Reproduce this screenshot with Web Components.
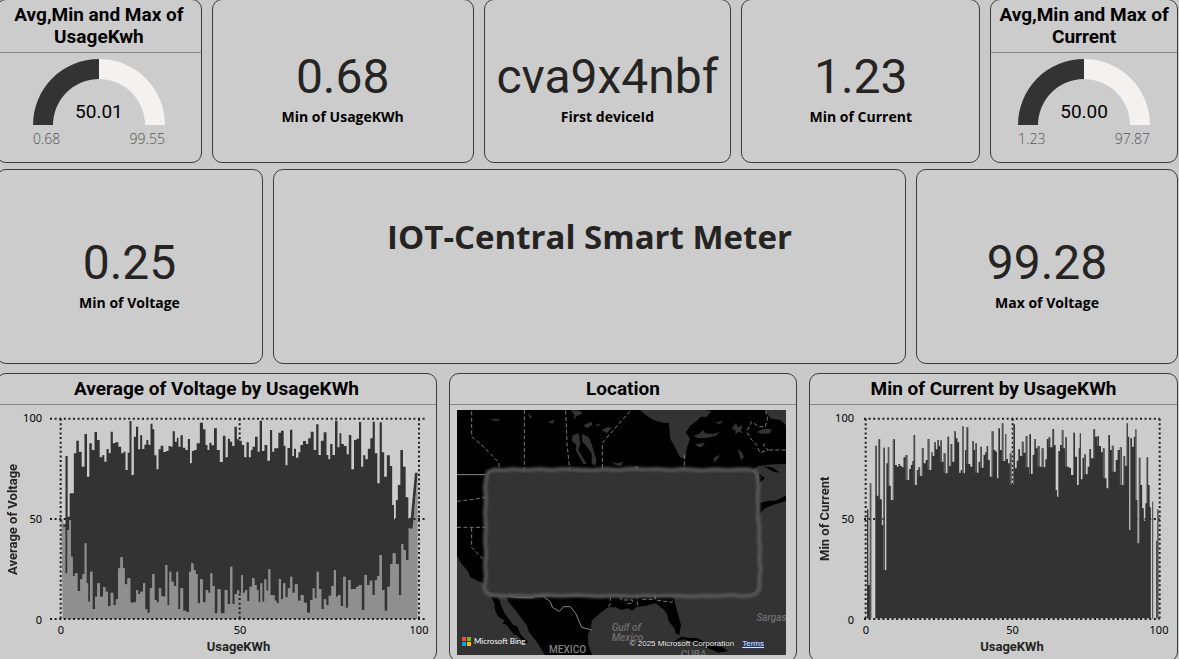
<!DOCTYPE html>
<html lang="en">
<head>
<meta charset="utf-8">
<meta name="viewport" content="width=device-width, initial-scale=1">
<title>IOT-Central Smart Meter</title>
<style>
  body { margin: 0; background: #c9c9c9; color: #000; font-family: Roboto, "Liberation Sans", sans-serif; }
</style>
</head>
<body>
<smart-dashboard></smart-dashboard>

<template id="t-dashboard">
  <style>
    :host { display: block; min-height: 100vh; overflow: hidden; }
    main {
      display: grid; gap: 6px;
      grid-template-rows: 164fr 195fr 292fr;
      min-height: calc(100vh + 4px);
      margin: -1px 1px -3px -4px;
    }
    .row { display: grid; gap: 10px; }
    .top { grid-template-columns: 206fr 262fr 248fr 239fr 188fr; }
    .mid { grid-template-columns: 267fr 633fr 262fr; }
    .low { grid-template-columns: 441fr 348fr 369fr; gap: 12px; margin-top: 3px; }
    h1 {
      margin: 0; padding-top: 43px; text-align: center; color: #252423;
      font: 700 33px/48px "Open Sans", "Noto Sans", sans-serif;
    }
    .current { --pad-left: 7px; --pad-right: 15px; --tick-left: -8px; --tick-right: -9px; }
  </style>
  <main>
    <div class="row top">
      <dash-card heading="Avg,Min and Max of UsageKwh"><value-gauge value="50.01" min="0.68" max="99.55"></value-gauge></dash-card>
      <dash-card><kpi-value value="0.68">Min of UsageKWh</kpi-value></dash-card>
      <dash-card><kpi-value value="cva9x4nbf">First deviceId</kpi-value></dash-card>
      <dash-card><kpi-value value="1.23">Min of Current</kpi-value></dash-card>
      <dash-card heading="Avg,Min and Max of Current"><value-gauge value="50.00" min="1.23" max="97.87"></value-gauge></dash-card>
    </div>
    <div class="row mid">
      <dash-card><kpi-value value="0.25">Min of Voltage</kpi-value></dash-card>
      <dash-card><h1>IOT-Central Smart Meter</h1></dash-card>
      <dash-card><kpi-value value="99.28">Max of Voltage</kpi-value></dash-card>
    </div>
    <div class="row low">
      <dash-card heading="Average of Voltage by UsageKWh"><usage-chart series="voltage" ytitle="Average of Voltage"></usage-chart></dash-card>
      <dash-card heading="Location"><location-map></location-map></dash-card>
      <dash-card heading="Min of Current by UsageKWh"><usage-chart class="current" series="current" ytitle="Min of Current"></usage-chart></dash-card>
    </div>
  </main>
</template>

<template id="t-card">
  <style>
    :host {
      display: flex; flex-direction: column; box-sizing: border-box; min-width: 0;
      border: 1px solid #3a3a3a; border-radius: 10px; background: #ccc; overflow: hidden;
    }
    h2 {
      margin: 0; padding: 4px; text-align: center; border-bottom: 1px solid #858585;
      font-size: 19px; line-height: 22px; font-weight: 700;
    }
    h2[hidden] { display: none; }
    ::slotted(*) { flex: 1; min-height: 0; }
  </style>
  <h2></h2>
  <slot></slot>
</template>

<template id="t-kpi">
  <style>
    :host { display: flex; flex-direction: column; align-items: center; justify-content: center; gap: 6px; padding-top: 16px; }
    .value { font-size: 48px; line-height: 50px; color: #252423; }
    .label { font: 700 14px/18px "Open Sans", "Noto Sans", sans-serif; }
  </style>
  <div class="value"></div>
  <div class="label"><slot></slot></div>
</template>

<template id="t-gauge">
  <style>
    :host { display: flex; flex-direction: column; align-items: center; padding-top: 6px; }
    .dial { position: relative; width: 132px; height: 66px; }
    svg { display: block; width: 100%; height: 100%; }
    output { position: absolute; inset: auto 0 0; text-align: center; font-size: 19px; line-height: 26px; }
    .range {
      display: flex; justify-content: space-between; width: 132px; color: #555;
      font: 300 14px/20px "Open Sans", "Noto Sans", sans-serif; padding-top: 4px;
    }
  </style>
  <div class="dial">
    <svg viewBox="0 0 132 66" aria-hidden="true">
      <path fill="#333" d="M0 66A66 66 0 0 1 66 0V20A46 46 0 0 0 20 66Z"/>
      <path fill="#f3f2f1" d="M66 0A66 66 0 0 1 132 66H112A46 46 0 0 0 66 20Z"/>
    </svg>
    <output></output>
  </div>
  <div class="range"><span class="min"></span><span class="max"></span></div>
</template>

<template id="t-chart">
  <style>
    :host {
      display: grid; grid-template-columns: 16px 29px minmax(0, 1fr);
      grid-template-rows: minmax(120px, 1fr) 16px 18px;
      padding: 11px var(--pad-right, 9px) 5px var(--pad-left, 8px);
      font: 11px/12px "Noto Sans", "Open Sans", sans-serif;
    }
    .title { font: 700 13px/18px Roboto, sans-serif; color: #252423; text-align: center; }
    .y { writing-mode: vertical-rl; transform: rotate(180deg); line-height: 16px; }
    .yticks { display: flex; flex-direction: column; justify-content: space-between; text-align: right; padding-right: 8px; margin: -4px 0; }
    svg { width: 100%; height: 0; min-height: 100%; display: block; }
    .xticks {
      grid-column: 3; display: flex; justify-content: space-between; line-height: 16px;
      margin: 0 var(--tick-right, -4px) 0 var(--tick-left, -1px);
    }
    .xticks span { width: 24px; text-align: center; }
    .x { grid-column: 3; }
    .grid { fill: none; stroke: #1c1c1c; stroke-width: 2; stroke-dasharray: 2 2.6; }
    .grid path { vector-effect: non-scaling-stroke; }
  </style>
  <div class="title y"></div>
  <div class="yticks"><span>100</span><span>50</span><span>0</span></div>
  <svg preserveAspectRatio="none" role="img">
    <path class="area" fill="#8f8f8f"/>
    <g class="grid"></g>
    <path class="data" fill="#333"/>
    <path class="edges" fill="#6a6a6a"/>
  </svg>
  <div class="xticks"><span>0</span><span>50</span><span>100</span></div>
  <div class="title x">UsageKWh</div>
</template>

<template id="t-map">
  <style>
    :host { display: grid; padding: 5px 10px 6px 7px; }
    .map { position: relative; overflow: hidden; background: #333; }
    .canvas { position: absolute; inset: 0; width: 100%; height: 100%; }
    .label { position: absolute; color: #6e6e6e; font-size: 10px; line-height: 10px; font-weight: 500; }
    .gulf { left: 47%; top: 87%; font-style: italic; }
    .sea { left: 91%; top: 83%; font-style: italic; }
    .mexico { left: 28%; top: 96%; color: #808080; }
    .cuba { left: 68%; top: 98%; }
    .brand { position: absolute; left: 5px; bottom: 8px; display: flex; align-items: center; gap: 3px; color: #fff; font: 8px/12px Lato, sans-serif; }
    .brand svg { width: 9px; height: 9px; }
    .legal {
      position: absolute; right: 22px; bottom: 5px; display: flex; gap: 8px; color: #fff;
      font: 8px/12px "Liberation Sans", sans-serif; text-shadow: 0 0 1px #000, 0 0 1px #000;
    }
    a { color: #dce6ff; text-shadow: 0 0 2px #2446b0, 0 0 1px #2446b0; }
  </style>
  <div class="map">
    <svg class="canvas" viewBox="36 120 987 735" preserveAspectRatio="xMidYMid slice" role="img" aria-label="Map of North America">
      <defs><filter id="glow" x="-5%" y="-5%" width="110%" height="110%"><feGaussianBlur stdDeviation="4"/></filter></defs>
      <rect x="36" y="120" width="987" height="735" fill="#333"/>
      <path d="M36 120H585L600 133 625 150 655 158 672 158 675 205 690 232 705 262 722 266 724 240 735 205 722 188 735 168 758 150 775 132 790 120H1000L1003 135 1023 142V282L985 283 940 288 920 300V660H120L115 640 75 622 70 605 48 580 36 558Z"/>
      <path d="M138 680H160L168 705 178 728 205 765 216 768 228 795 252 818 240 820 215 795 205 792 185 765 172 760 180 752 160 740 150 720 148 700Z"/>
      <path d="M185 680L190 695 215 725 245 765 252 785 275 815 300 855H442L430 825 428 795 438 775 440 752 470 725 490 712 512 712 530 720 548 715 562 722 575 710 600 708 632 700 655 718 665 730 672 755 688 775 692 790 703 795 708 765 700 735 690 700 688 680Z"/>
      <path d="M680 818L710 800 735 805 755 803 790 822 830 830 850 843 820 848 780 830 745 815 715 808Z"/>
      <path d="M942 400L965 393 990 392 1005 386 1023 376V393L985 404 960 415 943 433ZM955 289L982 292 1005 308 985 305ZM942 310L960 325 942 340Z"/>
      <g fill="#333">
        <path d="M410 192L430 200 440 222 447 245 455 272 450 288 440 280 440 250 424 228 412 215ZM383 196L402 203 406 220 400 240 425 282 415 282 392 240 394 225 380 212Z"/>
        <path d="M378 120L405 122 412 132 395 138 385 150 388 135ZM416 165L440 155 442 165 425 175ZM470 180L490 170 500 175 485 190ZM500 275L515 280 535 276 528 288 512 285ZM308 155L330 150 322 162ZM138 147L162 146 162 152 145 152ZM248 128L262 140 255 146ZM385 195L400 190 405 205 388 212ZM450 168L462 160 465 166Z"/>
        <path d="M745 198L765 190 775 180 780 190 805 192 825 185 812 198 780 205 760 204ZM750 222L780 218 770 232 758 230ZM765 140L778 125 800 122 785 140ZM808 158L835 152 825 162ZM805 280L808 262 826 255 818 266ZM860 175L872 160 880 172 893 165 888 182 895 190 880 185 870 195 872 182ZM878 238L890 246 897 260 888 270 884 258ZM935 186L955 176 980 178 975 190 950 192Z"/>
        <path d="M962 120H1023V165L1005 150 975 145Z"/>
      </g>
      <g fill="none" stroke="#777" stroke-width="3" stroke-dasharray="12 7">
        <path d="M80 124V200L105 220 130 245 162 278V300M238 120V300M362 122L366 220 374 300M555 124L472 218V300M718 255V300M36 394L85 388 122 382M36 472H122M80 474V532L122 574M128 315V350"/>
        <path d="M962 122L968 145 960 172 938 168 920 155 905 185 920 210 935 225 945 248 970 240 955 228 962 215M972 240H1023M496 680V700L490 712M528 680V690H562V700H540M577 675V710M592 688H630V672L632 690 680 697 686 682"/>
      </g>
      <g fill="none" stroke="#888" stroke-width="3">
        <path d="M36 314H122"/>
        <path d="M190 678L215 683H265L272 678H294L316 695 322 712 343 724 356 710H376L392 730 410 772 440 780"/>
      </g>
      <path fill="#333" stroke="#606060" stroke-width="9" stroke-linejoin="round" filter="url(#glow)" d="M124 318L130 305 148 298 175 300 205 296 240 299 285 296 320 299 350 296 395 298 440 300 480 296 520 299 560 295 600 298 640 296 675 300 710 296 740 298 770 301 810 297 850 300 885 297 915 298 932 305 939 320 941 350 938 380 941 410 939 440 944 475 942 505 946 535 943 565 947 600 943 630 944 655 935 670 918 677 880 679 865 674 820 679 780 677 735 680 690 677 640 679 600 677 555 681 510 677 455 680 400 676 350 679 300 676 250 680 210 677 170 679 140 676 124 668 117 652 122 620 119 585 123 550 119 510 122 470 119 430 122 390 119 350Z"/>
      <path fill="#333" d="M136 310H928V666H132Z"/>
      <circle cx="575" cy="294" r="6" fill="#555"/>
    </svg>
    <span class="label gulf">Gulf of<br>Mexico</span>
    <span class="label sea">Sargas</span>
    <span class="label mexico">MEXICO</span>
    <span class="label cuba">CUBA</span>
    <div class="brand">
      <svg viewBox="0 0 9 9" aria-hidden="true"><path fill="#f25022" d="M0 0h4v4H0z"/><path fill="#7fba00" d="M5 0h4v4H5z"/><path fill="#00a4ef" d="M0 5h4v4H0z"/><path fill="#ffb900" d="M5 5h4v4H5z"/></svg>
      <span>Microsoft Bing</span>
    </div>
    <div class="legal"><span>© 2025 Microsoft Corporation</span><a href="#terms">Terms</a></div>
  </div>
</template>

<script>
const pairs = text => text.trim().split(/\s+/).map(p => p.split(',').map(Number));

/* Samples as x,y in plot units: 100 sits at y=146 and 0 at y=747. */
const voltageHigh = pairs(`186,447 193,463 200,258 206,440 212,370 218,370 225,250 233,212 240,245 250,290 257,192 265,320 271,220 280,240 287,186 295,210 303,262 310,256 316,275 323,237 329,250 335,185 342,220 350,217 360,230 367,250 373,245 380,300 386,248 391,153 398,315 405,200 411,170 418,238 423,196 430,237 436,224 442,210 448,224 455,161 460,178 466,256 473,298 478,238 486,227 494,246 502,243 509,228 515,230 521,184 528,215 533,203 538,230 545,196 552,233 560,240 567,207 573,280 578,243 586,240 594,220 605,158 613,178 620,225 625,240 631,218 638,226 646,175 655,240 664,276`);
const voltageHighRight = pairs(`13,197 20,262 27,206 33,215 40,228 47,170 54,208 62,212 69,225 76,262 83,217 90,262 95,240 100,230 110,200 116,245 122,152 130,243 137,225 147,272 153,180 160,245 165,235 172,235 178,188 188,182 194,227 199,286 206,234 214,179 220,258 224,236 232,263 238,247 244,225 254,213 262,222 267,205 277,185 285,240 292,163 299,255 306,212 316,187 323,255 327,268 334,222 341,255 349,152 356,232 361,190 367,222 376,228 384,253 389,195 399,298 405,210 414,206 420,156 427,290 432,256 440,268 447,236 455,205 461,155 468,250 476,340 482,157 489,247 496,320 505,256 514,288 519,405 525,448 530,390 537,345 545,240 553,290 561,382 569,447`);
const voltageLow = pairs(`186,447 193,470 199,610 205,480 210,450 216,560 221,618 228,610 237,663 244,628 251,612 257,520 262,640 267,695 273,605 282,717 288,680 295,640 305,680 313,652 320,665 328,708 336,668 344,705 351,688 357,595 365,562 372,595 377,643 387,625 395,698 405,697 412,660 417,672 425,665 433,640 438,718 446,728 453,655 460,612 467,690 473,697 480,655 487,678 493,680 499,585 505,705 511,605 517,635 526,648 532,605 537,717 545,655 554,722 564,727 570,605 577,580 584,600 590,612 596,700 604,628 613,697 621,660 628,668 634,610 640,648 648,730 657,658 667,730`);
const voltageLowRight = pairs(`10,730 18,660 27,703 34,590 40,702 48,672 55,660 61,670 66,615 72,668 78,660 85,693 92,650 100,625 107,645 113,660 118,697 124,640 130,695 136,628 142,662 148,598 154,675 161,676 167,692 173,700 180,627 186,688 192,640 200,682 207,655 214,620 220,668 229,643 238,692 246,675 256,698 266,728 275,690 281,655 287,685 293,605 300,657 308,717 315,688 322,705 330,677 338,648 345,600 351,680 357,675 366,708 373,620 381,713 388,630 396,657 405,657 413,650 420,645 430,720 437,615 445,645 453,632 461,675 468,630 475,618 482,555 490,660 497,722 507,650 514,582 522,550 532,582 541,676 547,522 553,540 563,570 569,475`);
const currentHigh = pairs(`203,418 207,645 212,340 216,745 223,745 228,227 233,377 238,208 243,388 248,465 252,233 257,600 261,280 266,232 270,347 275,390 282,208 288,285 293,290 298,282 303,288 308,292 313,262 320,255 325,330 330,297 335,285 339,273 343,195 348,345 353,300 358,292 363,318 368,234 374,280 380,270 386,207 391,300 396,247 400,258 405,217 410,238 414,210 419,228 423,211 428,275 434,250 440,310 445,200 450,288 454,222 460,275 465,184 470,205 475,217 480,308 484,300 489,169 493,310 497,240 502,172 508,282 514,290 519,213 524,240 528,220 533,308 538,275 543,230 548,293 553,255 558,247 562,228 567,270`);
const currentHighRight = pairs(`32,320 38,184 44,240 49,245 53,325 57,175 63,240 68,160 73,273 77,192 81,267 87,280 92,250 97,345 102,163 108,295 112,272 117,238 123,258 128,215 134,248 140,198 145,292 150,193 156,312 160,255 165,207 170,235 176,228 182,290 188,235 194,292 198,268 203,207 208,202 214,232 220,177 225,225 229,360 233,380 237,243 243,225 248,180 253,235 258,202 263,290 270,293 276,315 282,188 288,260 294,345 298,235 301,190 305,328 310,263 315,253 320,313 326,290 330,237 336,265 343,178 348,200 354,198 360,228 366,247 371,235 377,325 382,355 387,195 393,240 398,227 404,305 410,270 416,240 423,232 428,345 433,258 438,287 442,160 446,200 449,480 453,205 459,230 464,200 468,178 471,390 474,520 479,263 484,345 489,415 494,452 498,400 502,262 507,345 511,412 514,745 518,395 521,745 527,745 530,512 534,418 537,745`);
const shift = (list, dx) => list.map(([x, y]) => [x + dx, y]);

/* Flat-topped run of samples, each reaching halfway to its neighbours. */
function steps(list) {
  const mids = list.slice(1).map((p, i) => (p[0] + list[i][0]) / 2);
  const out = [];
  list.forEach(([x, y], i) => {
    out.push([i ? mids[i - 1] : x - 2, y], [i < mids.length ? mids[i] : x + 2, y]);
  });
  return out;
}
const toPath = points => 'M' + points.map(p => p.join(' ')).join('L');

/* Lighter sliver down the left side of each bar that rises over both neighbours. */
function peakEdges(list) {
  return list.map(([x, y], i) => {
    const before = list[i - 1], after = list[i + 1];
    if (!before || !after || before[1] <= y || after[1] <= y) return '';
    const left = (before[0] + x) / 2;
    return `M${left} ${y}H${x}V${Math.max(before[1], after[1])}H${left}Z`;
  }).join('');
}

const SERIES = {
  voltage() {
    const high = steps([...voltageHigh, ...shift(voltageHighRight, 660)]);
    const low = steps([...voltageLow, ...shift(voltageLowRight, 660)]);
    const tail = [[1232, 447], [1245, 308], [1253, 308], [1238, 475], [1232, 477]];
    return {
      box: '150 138 1131 618',
      area: toPath([[188, 747], ...low, [1238, 475], [1253, 320], [1253, 747]]) + 'Z',
      data: toPath([...high, ...tail, ...low.reverse()]) + 'Z',
      edges: '',
      grid: ['M150 146H1281', 'M150 447H1281', 'M150 747H1281', 'M182 146V747', 'M719 146V747', 'M1257 146V747']
    };
  },
  current() {
    const samples = [...currentHigh, ...shift(currentHighRight, 540)];
    return {
      box: '186 138 900 618',
      area: '',
      data: toPath([[201, 745], ...steps(samples), [1079, 745]]) + 'Z',
      edges: peakEdges(samples),
      grid: ['M192 146H1079', 'M192 447H1079', 'M192 747H1079', 'M197 146V747', 'M638 146V747', 'M1079 146V747']
    };
  }
};

class TemplateElement extends HTMLElement {
  constructor() {
    super();
    this.attachShadow({ mode: 'open' });
    this.shadowRoot.append(document.getElementById(this.constructor.template).content.cloneNode(true));
  }
  $(selector) { return this.shadowRoot.querySelector(selector); }
}

customElements.define('dash-card', class extends TemplateElement {
  static template = 't-card';
  connectedCallback() {
    const heading = this.getAttribute('heading');
    this.$('h2').textContent = heading || '';
    this.$('h2').hidden = !heading;
  }
});

customElements.define('kpi-value', class extends TemplateElement {
  static template = 't-kpi';
  connectedCallback() { this.$('.value').textContent = this.getAttribute('value'); }
});

customElements.define('value-gauge', class extends TemplateElement {
  static template = 't-gauge';
  connectedCallback() {
    this.$('output').textContent = this.getAttribute('value');
    this.$('.min').textContent = this.getAttribute('min');
    this.$('.max').textContent = this.getAttribute('max');
  }
});

customElements.define('usage-chart', class extends TemplateElement {
  static template = 't-chart';
  connectedCallback() {
    const { box, area, data, edges, grid } = SERIES[this.getAttribute('series')]();
    const title = this.getAttribute('ytitle');
    this.$('.y').textContent = title;
    this.$('svg').setAttribute('viewBox', box);
    this.$('svg').setAttribute('aria-label', title + ' by UsageKWh');
    this.$('.area').setAttribute('d', area);
    this.$('.data').setAttribute('d', data);
    this.$('.edges').setAttribute('d', edges);
    this.$('.grid').innerHTML = grid.map(d => `<path d="${d}"/>`).join('');
  }
});

customElements.define('location-map', class extends TemplateElement { static template = 't-map'; });
customElements.define('smart-dashboard', class extends TemplateElement { static template = 't-dashboard'; });
</script>
</body>
</html>
